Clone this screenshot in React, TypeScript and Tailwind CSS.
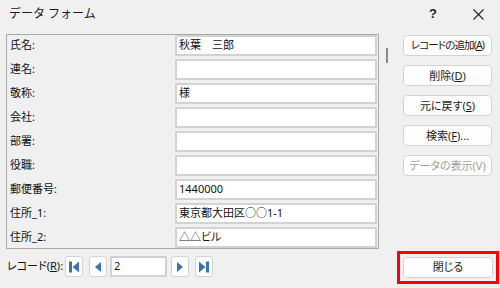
import React from "react";

const rows: [string, string][] = [
  ["氏名:", "秋葉　三郎"],
  ["連名:", ""],
  ["敬称:", "様"],
  ["会社:", ""],
  ["部署:", ""],
  ["役職:", ""],
  ["郵便番号:", "1440000"],
  ["住所_1:", "東京都大田区○○1-1"],
  ["住所_2:", "△△ビル"],
];

function Btn({ children, disabled, className = "text-[11px]" }: { children: React.ReactNode; disabled?: boolean; className?: string }) {
  return (
    <div
      className={`w-[89px] h-[21px] flex items-center justify-center rounded-[4px] border border-[#d3d3d3] bg-[#fdfdfd] leading-none ${
        disabled ? "text-[#9d9d9d]" : "text-[#1b1b1b]"
      } ${className}`}
    >
      <span className="whitespace-nowrap">{children}</span>
    </div>
  );
}

function NavBtn({ kind, className = "" }: { kind: "first" | "prev" | "next" | "last"; className?: string }) {
  return (
    <div className={`w-[18px] h-[21px] flex items-center justify-center rounded-[3px] border border-[#d3d3d3] bg-[#fdfdfd] ${className}`}>
      <svg width="12" height="12" viewBox="0 0 12 12">
        {kind === "first" && (
          <>
            <rect x="1" y="0.5" width="3" height="11" fill="#3874b2" />
            <polygon points="11,0.5 11,11.5 4.5,6" fill="#3874b2" />
          </>
        )}
        {kind === "prev" && <polygon points="9,1 9,11 3,6" fill="#3874b2" />}
        {kind === "next" && <polygon points="3,1 3,11 9,6" fill="#3874b2" />}
        {kind === "last" && (
          <>
            <polygon points="1,0.5 1,11.5 7.5,6" fill="#3874b2" />
            <rect x="8" y="0.5" width="3" height="11" fill="#3874b2" />
          </>
        )}
      </svg>
    </div>
  );
}

export default function App() {
  return (
    <div
      className="w-[500px] h-[288px] bg-[#f0f0f0] text-[#111] overflow-hidden [font-feature-settings:'palt']"
      style={{ fontFamily: '"Noto Sans", "Noto Sans CJK JP", sans-serif' }}
    >
      {/* title bar */}
      <div className="h-[28px] flex items-center">
        <div className="pl-[9px] text-[12px] text-[#1a1a1a] flex-1 [font-feature-settings:normal]">データ フォーム</div>
        <div className="w-[12px] text-[13px] text-[#222] font-semibold mr-[33px] text-center" style={{ fontFamily: '"Liberation Sans", sans-serif' }}>
          ?
        </div>
        <div className="mr-[16px] w-[12px] h-[12px] flex items-center justify-center">
          <svg width="11" height="11" viewBox="0 0 11 11">
            <path d="M0.5 0.5 L10.5 10.5 M10.5 0.5 L0.5 10.5" stroke="#222" strokeWidth="1.1" />
          </svg>
        </div>
      </div>

      {/* main */}
      <div className="flex pt-[6px]">
        <div className="ml-[6px] w-[373px] border border-[#a9a9a9]">
          <div className="flex flex-col gap-[3px]">
            {rows.map(([label, value]) => (
              <div key={label} className="flex items-center h-[21px]">
                <div className="w-[168px] pl-[3px] text-[11px] text-[#111]">{label}</div>
                <div className="w-[202px] h-[21px] border-2 border-[#d2d2d2] bg-white flex items-center pl-[2px] text-[11px] text-[#111]">
                  {value}
                </div>
              </div>
            ))}
          </div>
        </div>
        <div className="w-[24px] pl-[7px] pt-[14px]">
          <div className="w-[2px] h-[15px] bg-[#8a8a8a]" />
        </div>
        <div className="flex flex-col gap-[9px] pt-[1px]">
          <Btn className="text-[10.5px] tracking-[-0.9px]">
            レコードの追加(<span className="underline">A</span>)
          </Btn>
          <Btn>
            削除(<span className="underline">D</span>)
          </Btn>
          <Btn>
            元に戻す(<span className="underline">S</span>)
          </Btn>
          <Btn>
            検索(<span className="underline">F</span>)...
          </Btn>
          <Btn disabled>データの表示(V)</Btn>
        </div>
      </div>

      {/* bottom */}
      <div className="flex items-start pt-[2px]">
        <div className="flex items-center pt-[5px]">
          <div className="pl-[7px] w-[65px] text-[11px] text-[#111]">
            レコード(<span className="underline">R</span>):
          </div>
          <NavBtn kind="first" />
          <NavBtn kind="prev" className="ml-[6px]" />
          <div className="ml-[3px] w-[57px] h-[21px] border-2 border-[#d2d2d2] bg-white flex items-center pl-[2px] text-[11px]">
            2
          </div>
          <NavBtn kind="next" className="ml-[4px]" />
          <NavBtn kind="last" className="ml-[6px]" />
        </div>
        <div className="ml-auto mr-[1px] border-[3px] border-[#ff0000] p-[3px]">
          <div className="w-[90px] h-[21px] flex items-center justify-center rounded-[4px] border border-[#d3d3d3] bg-[#fdfdfd] text-[11px] text-[#1b1b1b]">
            閉じる
          </div>
        </div>
      </div>
    </div>
  );
}
